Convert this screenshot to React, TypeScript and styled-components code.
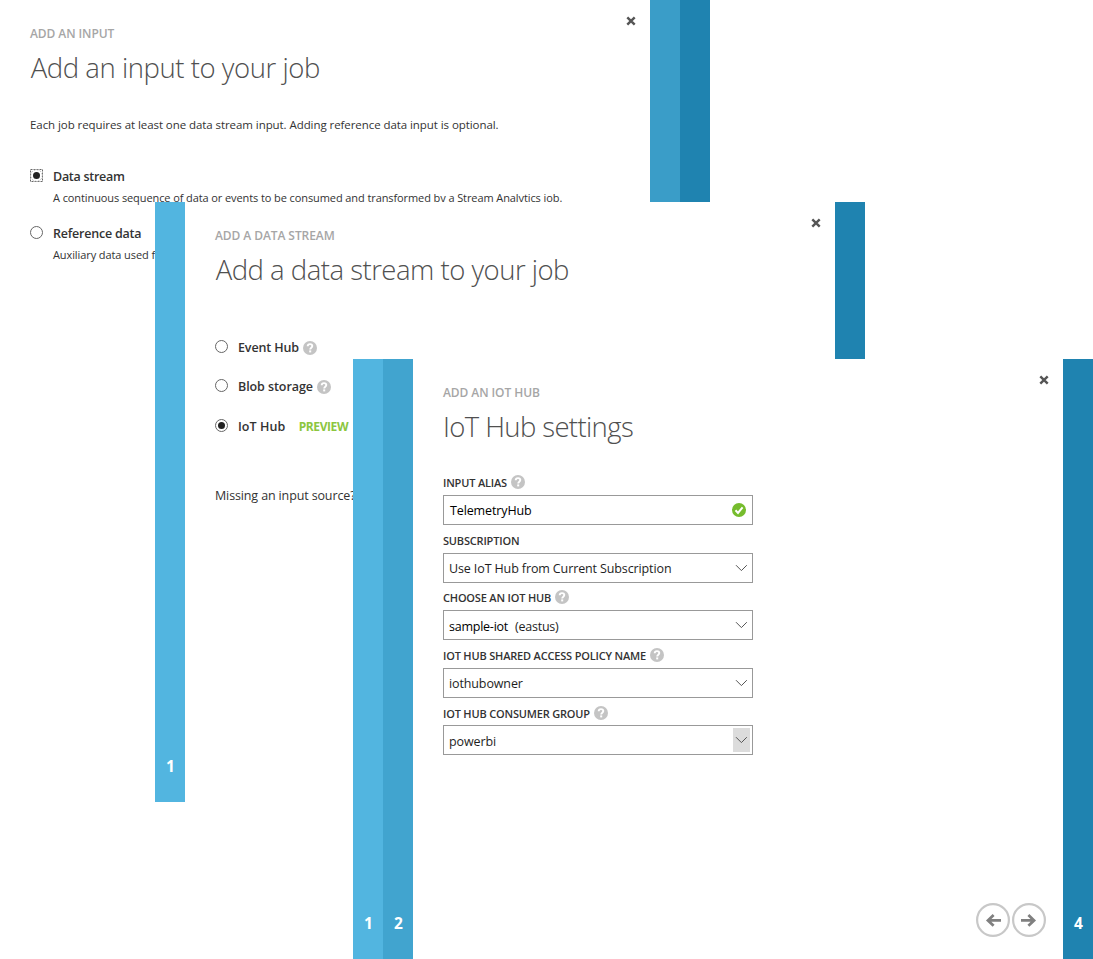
import React from "react";
import styled, { createGlobalStyle } from "styled-components";

const GlobalStyle = createGlobalStyle`
  body {
    margin: 0;
    background: #fff;
    color: #333;
    font-family: "Open Sans", "Noto Sans", sans-serif;
  }
  * { box-sizing: border-box; }
`;

const Stage = styled.main`
  position: relative;
  width: 1093px;
  height: 959px;
  overflow: hidden;
`;

const Dialog = styled.section<{ $left: number; $top: number }>`
  position: absolute;
  left: ${(p) => p.$left}px;
  top: ${(p) => p.$top}px;
  display: flex;
  height: 600px;
`;

const StepBar = styled.div<{ $color: string }>`
  display: flex;
  width: 30px;
  flex: none;
  align-items: flex-end;
  justify-content: center;
  padding: 0 0 26px 1px;
  background: ${(p) => p.$color};
  color: #fff;
  font-size: 15.5px;
  font-weight: 700;
  line-height: 20px;
`;

const Body = styled.div`
  position: relative;
  width: 650px;
  padding: 26px 30px 0;
  background: #fff;
`;

const CloseButton = styled.button`
  position: absolute;
  top: 16px;
  right: 14px;
  width: 10px;
  height: 10px;
  padding: 0;
  border: 0;
  background: none;
  svg { display: block; }
`;

const Kicker = styled.div`
  color: #a6a6a6;
  font-size: 12px;
  font-weight: 600;
  line-height: 16px;
  letter-spacing: -0.08px;
`;

const Title = styled.h1<{ $tracking: number; $indent?: number }>`
  margin: 6px 0 0;
  padding-left: ${(p) => p.$indent ?? 0}px;
  color: #505050;
  font-size: 27.5px;
  font-weight: 300;
  line-height: 40px;
  letter-spacing: ${(p) => p.$tracking}px;
  white-space: nowrap;
`;

const Intro = styled.p`
  margin: 29px 0 35px;
  font-size: 11.5px;
  line-height: 16px;
  letter-spacing: -0.07px;
  white-space: nowrap;
`;

const Option = styled.label<{ $gap: number }>`
  display: flex;
  align-items: flex-start;
  gap: 10px;
  margin-bottom: ${(p) => p.$gap}px;
`;

const Radio = styled.span<{ $checked?: boolean }>`
  display: flex;
  flex: none;
  align-items: center;
  justify-content: center;
  width: 13px;
  height: 13px;
  margin-top: 1px;
  border: 1px solid #666;
  border-radius: 50%;
  &::after {
    content: "";
    width: 7px;
    height: 7px;
    border-radius: 50%;
    background: ${(p) => (p.$checked ? "#222" : "transparent")};
  }
`;

const FocusFrame = styled.span`
  display: block;
  flex: none;
  width: 13px;
  height: 13px;
  margin-top: 1px;
  svg { display: block; }
`;

const OptionText = styled.div`
  white-space: nowrap;
`;

const OptionName = styled.div<{ $tracking: number }>`
  display: flex;
  align-items: center;
  font-size: 12.5px;
  font-weight: 600;
  line-height: 18px;
  letter-spacing: ${(p) => p.$tracking}px;
`;

const OptionHint = styled.div`
  margin-top: 4px;
  font-size: 11px;
  line-height: 16px;
  letter-spacing: -0.093px;
`;

const StreamOptions = styled.div`
  padding-top: 49px;
`;

const Preview = styled.span`
  margin-left: 13.5px;
  color: #8cc63f;
  font-size: 12px;
  font-weight: 700;
  letter-spacing: -0.42px;
`;

const Footnote = styled.p`
  margin: 51px 0 0;
  font-size: 12.5px;
  line-height: 18px;
  letter-spacing: -0.13px;
  white-space: nowrap;
`;

const Form = styled.div`
  width: 310px;
  padding-top: 27px;
`;

const Field = styled.div<{ $gap: number }>`
  margin-bottom: ${(p) => p.$gap}px;
`;

const FieldLabel = styled.div<{ $lead?: number }>`
  display: flex;
  align-items: center;
  height: 18px;
  margin-bottom: 3px;
  padding-top: ${(p) => p.$lead ?? 0}px;
  font-size: 11px;
  font-weight: 600;
  line-height: 18px;
  letter-spacing: -0.18px;
  white-space: nowrap;
`;

const Control = styled.div<{ $inset?: number }>`
  display: flex;
  align-items: center;
  justify-content: space-between;
  height: 30px;
  padding: 1px 2px 0 ${(p) => p.$inset ?? 5}px;
  border: 1px solid #999;
  color: #1e1e1e;
  font-size: 12.5px;
  line-height: 18px;
  letter-spacing: -0.12px;
`;

const Value = styled.span<{ $strong?: boolean; $drop?: number }>`
  padding-top: ${(p) => p.$drop ?? 0}px;
  color: ${(p) => (p.$strong ? "#000" : "inherit")};
`;

const HubValue = styled.span`
  display: flex;
  gap: 7px;
  padding-top: 2px;
  letter-spacing: -0.24px;
`;

const DropArrow = styled.span<{ $active?: boolean }>`
  display: flex;
  align-items: center;
  justify-content: center;
  width: 17px;
  height: 24px;
  margin-top: -1px;
  background: ${(p) => (p.$active ? "#dcdcdc" : "transparent")};
`;

const ValidMark = styled.span`
  width: 14px;
  height: 14px;
  margin: -1px 4px 0 0;
  svg { display: block; }
`;

const HelpMark = styled.span`
  width: 14px;
  height: 14px;
  margin: -1px 0 0 4px;
  flex: none;
  svg { display: block; }
  ${FieldLabel}:first-child > & { margin-top: -1.5px; }
`;

const NavButtons = styled.nav`
  position: absolute;
  right: 17px;
  bottom: 22px;
  display: flex;
  gap: 2px;
`;

const NavButton = styled.button`
  width: 34px;
  height: 34px;
  padding: 0;
  border: 0;
  background: none;
  svg { display: block; }
`;

const Close = () => (
  <CloseButton aria-label="Close">
    <svg width="10" height="10" viewBox="0 0 10 10">
      <path d="M1.3 1.3 8.7 8.7M8.7 1.3 1.3 8.7" stroke="#555" strokeWidth="2.4" fill="none" />
    </svg>
  </CloseButton>
);

const Help = () => (
  <HelpMark>
    <svg width="14" height="14" viewBox="0 0 14 14" fill="none">
      <circle cx="7" cy="7" r="7" fill="#c4c4c4" />
      <path d="M4.7 5.3C4.7 3.9 5.7 3.1 7 3.1s2.3.8 2.3 2c0 1.6-2.1 1.6-2.1 3.4" stroke="#fff" strokeWidth="1.9" />
      <rect x="6.2" y="9.4" width="2" height="2" fill="#fff" />
    </svg>
  </HelpMark>
);

const Valid = () => (
  <ValidMark>
    <svg width="14" height="14" viewBox="0 0 14 14" fill="none">
      <circle cx="7" cy="7" r="7" fill="#76bc2d" />
      <path d="M3.5 7.3 6 9.9 10.6 4.3" stroke="#fff" strokeWidth="2" />
    </svg>
  </ValidMark>
);

const Drop = ({ active }: { active?: boolean }) => (
  <DropArrow $active={active}>
    <svg width="13" height="8" viewBox="0 0 13 8" fill="none">
      <path d="M1 1.2 6.4 6.6 11.8 1.2" stroke="#555" strokeWidth="1" />
    </svg>
  </DropArrow>
);

const FocusedRadio = () => (
  <FocusFrame>
    <svg width="13" height="13" viewBox="0 0 13 13" fill="none">
      <rect x=".5" y=".5" width="12" height="12" stroke="#666" strokeDasharray="2 1" />
      <circle cx="6.5" cy="6.5" r="5.8" stroke="#999" strokeWidth=".8" strokeDasharray="1.5 1.5" />
      <circle cx="6.5" cy="6.5" r="3.5" fill="#222" />
    </svg>
  </FocusFrame>
);

const Nav = ({ forward }: { forward?: boolean }) => (
  <NavButton aria-label={forward ? "Next" : "Previous"}>
    <svg width="34" height="34" viewBox="0 0 34 34" fill="none">
      <circle cx="17" cy="17" r="15.9" stroke="#c8c8c8" strokeWidth="2.2" />
      <path
        d={forward ? "M9 17.4H22M16.4 12.1 22 17.4 16.4 22.7" : "M25 17.4H12M17.6 12.1 12 17.4 17.6 22.7"}
        stroke="#808080"
        strokeWidth="2.8"
      />
    </svg>
  </NavButton>
);

export default function App() {
  return (
    <>
      <GlobalStyle />
      <Stage>
        <Dialog $left={0} $top={0}>
          <Body>
            <Close />
            <Kicker>ADD AN INPUT</Kicker>
            <Title $tracking={-0.44} $indent={0.7}>Add an input to your job</Title>
            <Intro>Each job requires at least one data stream input. Adding reference data input is optional.</Intro>
            <Option $gap={19}>
              <FocusedRadio />
              <OptionText>
                <OptionName $tracking={-0.28}>Data stream</OptionName>
                <OptionHint>
                  A continuous sequence of data or events to be consumed and transformed by a Stream Analytics job.
                </OptionHint>
              </OptionText>
            </Option>
            <Option $gap={0}>
              <Radio />
              <OptionText>
                <OptionName $tracking={-0.22}>Reference data</OptionName>
                <OptionHint>Auxiliary data used for</OptionHint>
              </OptionText>
            </Option>
          </Body>
          <StepBar $color="#3a9dc8" />
          <StepBar $color="#1f83b0" />
        </Dialog>

        <Dialog $left={155} $top={202}>
          <StepBar $color="#52b5e0">1</StepBar>
          <Body>
            <Close />
            <Kicker>ADD A DATA STREAM</Kicker>
            <Title $tracking={-0.5} $indent={0.7}>Add a data stream to your job</Title>
            <StreamOptions>
              <Option $gap={21}>
                <Radio />
                <OptionName $tracking={-0.12}>
                  Event Hub
                  <Help />
                </OptionName>
              </Option>
              <Option $gap={22}>
                <Radio />
                <OptionName $tracking={-0.08}>
                  Blob storage
                  <Help />
                </OptionName>
              </Option>
              <Option $gap={0}>
                <Radio $checked />
                <OptionName $tracking={0.05}>
                  IoT Hub
                  <Preview>PREVIEW</Preview>
                </OptionName>
              </Option>
            </StreamOptions>
            <Footnote>Missing an input source?</Footnote>
          </Body>
          <StepBar $color="#1f83b0" />
        </Dialog>

        <Dialog $left={353} $top={359}>
          <StepBar $color="#52b5e0">1</StepBar>
          <StepBar $color="#41a4cf">2</StepBar>
          <Body>
            <Close />
            <Kicker>ADD AN IOT HUB</Kicker>
            <Title $tracking={-0.62}>IoT Hub settings</Title>
            <Form>
              <Field $gap={7}>
                <FieldLabel>
                  INPUT ALIAS
                  <Help />
                </FieldLabel>
                <Control $inset={6}>
                  <Value $strong>TelemetryHub</Value>
                  <Valid />
                </Control>
              </Field>
              <Field $gap={6}>
                <FieldLabel>SUBSCRIPTION</FieldLabel>
                <Control>
                  <Value>Use IoT Hub from Current Subscription</Value>
                  <Drop />
                </Control>
              </Field>
              <Field $gap={7}>
                <FieldLabel>
                  CHOOSE AN IOT HUB
                  <Help />
                </FieldLabel>
                <Control>
                  <HubValue>
                    <Value $strong>sample-iot</Value>
                    <Value>(eastus)</Value>
                  </HubValue>
                  <Drop />
                </Control>
              </Field>
              <Field $gap={6}>
                <FieldLabel>
                  IOT HUB SHARED ACCESS POLICY NAME
                  <Help />
                </FieldLabel>
                <Control>
                  <Value>iothubowner</Value>
                  <Drop />
                </Control>
              </Field>
              <Field $gap={0}>
                <FieldLabel $lead={2}>
                  IOT HUB CONSUMER GROUP
                  <Help />
                </FieldLabel>
                <Control>
                  <Value $drop={2}>powerbi</Value>
                  <Drop active />
                </Control>
              </Field>
            </Form>
            <NavButtons>
              <Nav />
              <Nav forward />
            </NavButtons>
          </Body>
          <StepBar $color="#1f83b0">4</StepBar>
        </Dialog>
      </Stage>
    </>
  );
}
